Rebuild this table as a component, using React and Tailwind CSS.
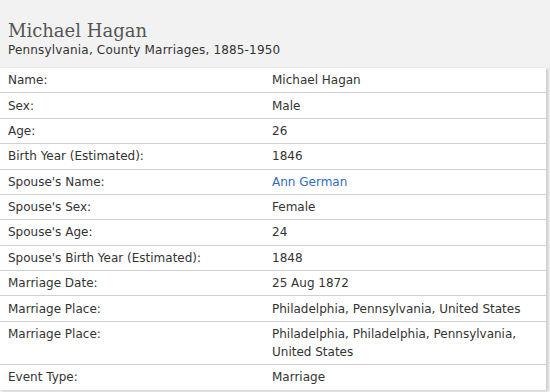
const rows = [
  ['Name:', 'Michael Hagan'],
  ['Sex:', 'Male'],
  ['Age:', '26'],
  ['Birth Year (Estimated):', '1846'],
  ["Spouse's Name:", 'Ann German', true],
  ["Spouse's Sex:", 'Female'],
  ["Spouse's Age:", '24'],
  ["Spouse's Birth Year (Estimated):", '1848'],
  ['Marriage Date:', '25 Aug 1872'],
  ['Marriage Place:', 'Philadelphia, Pennsylvania, United States'],
  ['Marriage Place:', 'Philadelphia, Philadelphia, Pennsylvania, United States'],
  ['Event Type:', 'Marriage'],
]

export default function App() {
  return (
    <div className="w-[550px] h-[392px] overflow-hidden bg-[#f2f2f2] text-[#333] font-['DejaVu_Sans',Verdana,sans-serif]">
      <div className="pt-[20px] pl-2 pb-[10px]">
        <h1 className="font-['DejaVu_Serif',Georgia,serif] text-[18px] leading-[22px] text-[#555]">Michael Hagan</h1>
        <p className="text-[12px] leading-[16px] tracking-[0.17px] text-[#333]">Pennsylvania, County Marriages, 1885-1950</p>
      </div>
      <div className="w-[546px] bg-white shadow-[2px_1px_3px_rgba(0,0,0,0.18)]">
        {rows.map(([label, value, link], i) => (
          <div key={i} className={`flex text-[12px] leading-[18px] ${i > 0 ? 'border-t border-[#d0d0d0]' : ''}`}>
            <div className="w-[272px] shrink-0 pl-2 py-[3.2px]">{label}</div>
            <div className={`flex-1 pr-[14px] py-[3.2px] ${link ? 'text-[#2f6bc0]' : ''}`}>{value}</div>
          </div>
        ))}
      </div>
    </div>
  )
}
